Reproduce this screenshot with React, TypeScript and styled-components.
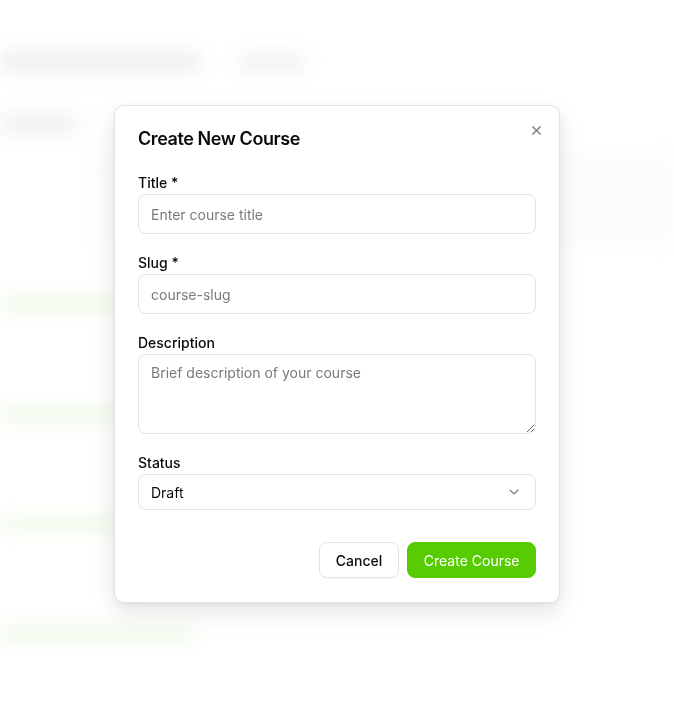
import React, { useState } from 'react';
import styled, { createGlobalStyle } from 'styled-components';
import { X, ChevronDown } from 'lucide-react';

const GlobalStyle = createGlobalStyle`
  * { box-sizing: border-box; }
  html, body { margin: 0; padding: 0; background: #fff; }
  body { font-family: Inter, 'Noto Sans', sans-serif; color: #0a0a0a; }
`;

// --- page behind the dialog (blurred) ---
const Page = styled.div`
  height: 720px; overflow: hidden; filter: blur(9px); opacity: 0.5;
  padding: 52px 0 0 0; display: flex; flex-direction: column;
`;

const TopRow = styled.div`
  display: flex; align-items: center; gap: 40px; margin-left: -20px;
`;

const Bar = styled.div<{ w: number; h?: number; tone?: string }>`
  width: ${p => p.w}px; height: ${p => p.h ?? 16}px; border-radius: 6px;
  background: ${p => p.tone ?? '#cfcfcf'};
`;

const Sub = styled.div` margin: 44px 0 0 -10px; `;

const StatsCard = styled.div`
  margin: 22px 0 0 96px; height: 90px; border: 1px solid #e6e6e6; border-radius: 10px; background: #f6f6f6;
`;

const List = styled.div`
  display: flex; flex-direction: column; gap: 94px; margin: 52px 0 0 -10px;
`;

// --- dialog ---
const Overlay = styled.div`
  position: fixed; inset: 0; display: flex; justify-content: center; align-items: flex-start; padding-top: 105px;
  background: rgba(255,255,255,0.35);
`;

const Dialog = styled.div`
  position: relative; width: 446px; background: #fff; border: 1px solid #e2e2e2; border-radius: 10px;
  padding: 22px 23px 24px; box-shadow: 0 10px 24px rgba(0,0,0,0.10), 0 2px 6px rgba(0,0,0,0.05);
`;

const Title = styled.h2`
  margin: 0; font-size: 18px; line-height: 22px; font-weight: 600; letter-spacing: -0.42px; color: #0a0a0a;
`;

const CloseBtn = styled.button`
  position: absolute; top: 16px; right: 15px; width: 16px; height: 16px; padding: 0; border: none; background: none;
  color: #555; display: flex; align-items: center; justify-content: center; cursor: pointer; opacity: 0.85;
`;

const Form = styled.div`
  display: flex; flex-direction: column; gap: 19px; margin-top: 23px;
`;

const Field = styled.div` display: flex; flex-direction: column; gap: 1px; `;

const Label = styled.label`
  font-size: 14px; line-height: 20px; font-weight: 500; color: #0a0a0a;
`;

const inputBase = `
  width: 100%; border: 1px solid #e3e3e3; border-radius: 8px; background: #fff; font-family: Inter, sans-serif;
  font-size: 14px; color: #0a0a0a; padding: 0 12px; outline: none;
  &::placeholder { color: #7a7a7a; }
`;

const Input = styled.input` ${inputBase} height: 40px; `;

const TextArea = styled.textarea` ${inputBase} height: 80px; padding-top: 8px; line-height: 20px; resize: vertical; display: block; `;

const SelectWrap = styled.div` position: relative; display: flex; align-items: center; `;

const Select = styled.select`
  ${inputBase} height: 36px; appearance: none; -webkit-appearance: none; cursor: pointer;
`;

const Chevron = styled.span`
  position: absolute; right: 14px; top: 10px; color: #777; display: flex; pointer-events: none;
`;

const Actions = styled.div`
  display: flex; justify-content: flex-end; gap: 8px; margin-top: 32px;
`;

const Button = styled.button<{ primary?: boolean }>`
  height: 36px; padding: 0 ${p => p.primary ? '15.5px' : '16px'}; border-radius: 8px; font-family: Inter, sans-serif; font-size: 14px;
  font-weight: ${p => p.primary ? 400 : 500};
  border: 1px solid ${p => p.primary ? '#58cc02' : '#e3e3e3'};
  background: ${p => p.primary ? '#58cc02' : '#fff'};
  color: ${p => p.primary ? '#fff' : '#0a0a0a'};
  box-shadow: ${p => p.primary ? 'none' : '0 1px 2px rgba(0,0,0,0.04)'};
  cursor: pointer;
`;

export default function App() {
  const [status, setStatus] = useState('draft');

  return (
    <>
      <GlobalStyle />
      <Page>
        <TopRow>
          <Bar w={220} h={20} />
          <Bar w={64} h={20} tone="#d8d8d8" />
        </TopRow>
        <Sub><Bar w={90} h={16} /></Sub>
        <StatsCard />
        <List>
          <Bar w={205} h={16} tone="#d2f0bb" />
          <Bar w={205} h={16} tone="#d2f0bb" />
          <Bar w={205} h={16} tone="#d2f0bb" />
          <Bar w={205} h={16} tone="#d2f0bb" />
        </List>
      </Page>

      <Overlay>
        <Dialog>
          <Title>Create New Course</Title>
          <CloseBtn aria-label="Close"><X size={15} strokeWidth={1.8} /></CloseBtn>
          <Form>
            <Field>
              <Label>Title *</Label>
              <Input placeholder="Enter course title" />
            </Field>
            <Field>
              <Label>Slug *</Label>
              <Input placeholder="course-slug" />
            </Field>
            <Field>
              <Label>Description</Label>
              <TextArea placeholder="Brief description of your course" />
            </Field>
            <Field>
              <Label>Status</Label>
              <SelectWrap>
                <Select value={status} onChange={e => setStatus(e.target.value)}>
                  <option value="draft">Draft</option>
                  <option value="published">Published</option>
                </Select>
                <Chevron><ChevronDown size={16} strokeWidth={1.6} /></Chevron>
              </SelectWrap>
            </Field>
          </Form>
          <Actions>
            <Button>Cancel</Button>
            <Button primary>Create Course</Button>
          </Actions>
        </Dialog>
      </Overlay>
    </>
  );
}
